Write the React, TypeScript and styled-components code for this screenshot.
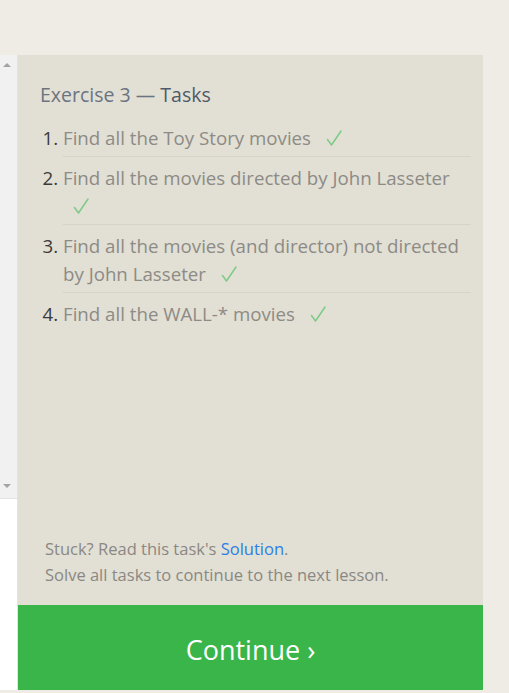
import React from "react";
import styled, { createGlobalStyle } from "styled-components";

const Global = createGlobalStyle`
  html, body { margin: 0; padding: 0; background: #efece5; }
  body { font-family: "Open Sans", "Noto Sans", sans-serif; }
  * { box-sizing: border-box; }
`;

const Page = styled.div`
  width: 509px;
  height: 693px;
  padding-top: 55px;
  display: flex;
  align-items: flex-start;
  background: #efece5;
`;

const EditorStub = styled.div`
  width: 18px;
  height: 635px;
  display: flex;
  flex-direction: column;
  border-right: 1px solid #e6e3da;
  background: #ffffff;
`;

const ScrollTrack = styled.div`
  height: 444px;
  background: #f1f1f1;
  border-bottom: 1px solid #e3e3e3;
  display: flex;
  flex-direction: column;
  justify-content: space-between;
  align-items: center;
  padding: 8px 0 10px;
`;

const Arrow = styled.div<{ $down?: boolean }>`
  width: 0;
  height: 0;
  border-left: 4px solid transparent;
  border-right: 4px solid transparent;
  ${(p) =>
    p.$down
      ? "border-top: 4px solid #a3a3a3;"
      : "border-bottom: 4px solid #a3a3a3;"}
  margin-left: -4px;
`;

const Panel = styled.div`
  width: 465px;
  height: 635px;
  background: #e2dfd4;
  display: flex;
  flex-direction: column;
`;

const Content = styled.div`
  flex: 1;
  padding: 26px 12px 0 22px;
`;

const Heading = styled.h2`
  margin: 0 0 8px;
  font-size: 19.5px;
  font-weight: 400;
  line-height: 28px;
  color: #6b7480;
`;

const Strong = styled.span`
  color: #4f5a69;
`;

const List = styled.ol`
  margin: 0;
  padding: 0 0 0 23px;
  color: #3a3a3a;
  font-size: 18.7px;
  line-height: 28px;
`;

const Item = styled.li<{ $last?: boolean }>`
  padding: 7px 0 4px 0;
  border-bottom: 1px solid ${(p) => (p.$last ? "transparent" : "#d6d3c8")};
  &::marker {
    color: #3a3a3a;
  }
`;

const Task = styled.span`
  color: #8d8b86;
`;

const Check = styled.svg`
  width: 16px;
  height: 16px;
  margin-left: 10px;
  vertical-align: -1px;
`;

const Note = styled.div`
  padding: 0 22px 17px 27px;
  font-size: 16.5px;
  line-height: 26px;
  color: #8a8883;
`;

const Link = styled.a`
  color: #2d7ee6;
  text-decoration: none;
`;

const ContinueButton = styled.button`
  height: 85px;
  border: none;
  background: #3ab54a;
  color: #ffffff;
  font-family: inherit;
  font-size: 27px;
  padding: 3px 0 0;
  cursor: pointer;
`;

const tasks = [
  "Find all the Toy Story movies",
  "Find all the movies directed by John Lasseter",
  "Find all the movies (and director) not directed by John Lasseter",
  "Find all the WALL-* movies",
];

function CheckMark() {
  return (
    <Check viewBox="0 0 16 16" aria-hidden="true">
      <path
        d="M1.5 9.5 L5.5 15 L15 1"
        fill="none"
        stroke="#7dcb87"
        strokeWidth="1.5"
        strokeLinecap="round"
        strokeLinejoin="round"
      />
    </Check>
  );
}

export default function App() {
  return (
    <>
      <Global />
      <Page>
        <EditorStub>
          <ScrollTrack>
            <Arrow />
            <Arrow $down />
          </ScrollTrack>
        </EditorStub>
        <Panel>
          <Content>
            <Heading>
              Exercise 3 — <Strong>Tasks</Strong>
            </Heading>
            <List>
              {tasks.map((t, i) => (
                <Item key={t} $last={i === tasks.length - 1}>
                  <Task>{t}</Task> <CheckMark />
                </Item>
              ))}
            </List>
          </Content>
          <Note>
            Stuck? Read this task's <Link href="#">Solution</Link>.
            <br />
            Solve all tasks to continue to the next lesson.
          </Note>
          <ContinueButton>Continue ›</ContinueButton>
        </Panel>
      </Page>
    </>
  );
}
